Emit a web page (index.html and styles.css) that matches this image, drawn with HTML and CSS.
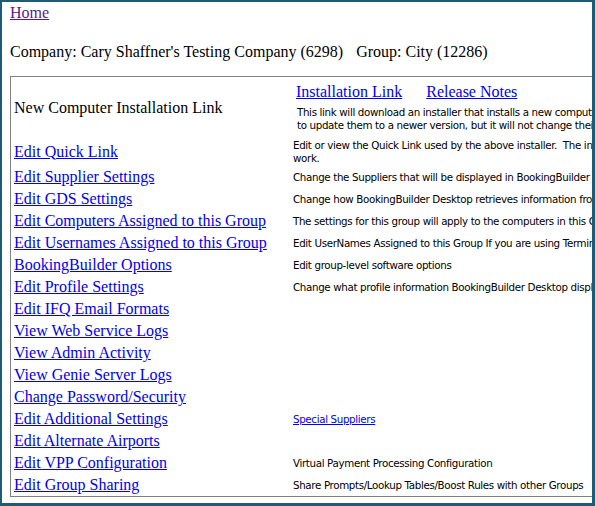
FILE: index.html
```html
<!DOCTYPE html>
<html lang="en">
<head>
  <meta charset="UTF-8">
  <title>Group Administration</title>
  <link rel="stylesheet" href="styles.css">
</head>
<body>

<div class="frame">
  <a class="home" href="#">Home</a>

  <div class="company">
    Company: Cary Shaffner's Testing Company (6298)<span class="group">Group: City (12286)</span>
  </div>

  <table class="admin">
    <tr class="install">
      <td class="name">New Computer Installation Link</td>
      <td class="info">
        <div class="install-links">
          <a href="#">Installation Link</a>
          <a href="#">Release Notes</a>
        </div>
        <div class="desc install-desc">This link will download an installer that installs a new computer with BookingBuilder Desktop. It can also be run on existing computers<br>to update them to a newer version, but it will not change their settings.</div>
      </td>
    </tr>
    <tr>
      <td class="name"><a href="#">Edit Quick Link</a></td>
      <td class="info desc">Edit or view the Quick Link used by the above installer.&nbsp; The installer uses this link to connect, so it must be valid for the installer to<br>work.</td>
    </tr>
    <tr>
      <td class="name"><a href="#">Edit Supplier Settings</a></td>
      <td class="info desc">Change the Suppliers that will be displayed in BookingBuilder Desktop</td>
    </tr>
    <tr>
      <td class="name"><a href="#">Edit GDS Settings</a></td>
      <td class="info desc">Change how BookingBuilder Desktop retrieves information from the GDS</td>
    </tr>
    <tr>
      <td class="name"><a href="#">Edit Computers Assigned to this Group</a></td>
      <td class="info desc">The settings for this group will apply to the computers in this Group</td>
    </tr>
    <tr>
      <td class="name"><a href="#">Edit Usernames Assigned to this Group</a></td>
      <td class="info desc">Edit UserNames Assigned to this Group If you are using Terminal Services</td>
    </tr>
    <tr>
      <td class="name"><a href="#">BookingBuilder Options</a></td>
      <td class="info desc">Edit group-level software options</td>
    </tr>
    <tr>
      <td class="name"><a href="#">Edit Profile Settings</a></td>
      <td class="info desc">Change what profile information BookingBuilder Desktop displays</td>
    </tr>
    <tr>
      <td class="name"><a href="#">Edit IFQ Email Formats</a></td>
      <td class="info desc"></td>
    </tr>
    <tr>
      <td class="name"><a href="#">View Web Service Logs</a></td>
      <td class="info desc"></td>
    </tr>
    <tr>
      <td class="name"><a href="#">View Admin Activity</a></td>
      <td class="info desc"></td>
    </tr>
    <tr>
      <td class="name"><a href="#">View Genie Server Logs</a></td>
      <td class="info desc"></td>
    </tr>
    <tr>
      <td class="name"><a href="#">Change Password/Security</a></td>
      <td class="info desc"></td>
    </tr>
    <tr>
      <td class="name"><a href="#">Edit Additional Settings</a></td>
      <td class="info desc"><a href="#">Special Suppliers</a></td>
    </tr>
    <tr>
      <td class="name"><a href="#">Edit Alternate Airports</a></td>
      <td class="info desc"></td>
    </tr>
    <tr>
      <td class="name"><a href="#">Edit VPP Configuration</a></td>
      <td class="info desc">Virtual Payment Processing Configuration</td>
    </tr>
    <tr>
      <td class="name"><a href="#">Edit Group Sharing</a></td>
      <td class="info desc">Share Prompts/Lookup Tables/Boost Rules with other Groups</td>
    </tr>
  </table>
</div>

</body>
</html>
```

FILE: styles.css
```css
* {
  box-sizing: border-box;
}

body {
  margin: 0;
  font-family: 'Liberation Serif', 'Times New Roman', serif;
  font-size: 16px;
  line-height: 18px;
  color: #000;
  background: #fff;
}

a {
  color: #0000ee;
}

.frame {
  width: 595px;
  height: 506px;
  overflow: hidden;
  border-style: solid;
  border-color: #1f5b75;
  border-width: 2px 3px 3px 2px;
  padding: 2px 8px 0;
}

.home {
  display: inline-block;
  color: #551a8b;
}

.company {
  margin-top: 21px;
  white-space: nowrap;
}

.group {
  margin-left: 13px;
}

.admin {
  margin-top: 15px;
  width: 1000px;
  table-layout: fixed;
  border: 1px solid #808080;
  border-collapse: separate;
  border-spacing: 0;
}

.admin td {
  vertical-align: middle;
  padding: 2px 3px;
}

.admin td.name {
  width: 279px;
  white-space: nowrap;
}

.admin td.info {
  padding: 2px 3px 1px;
}

.desc {
  font-family: 'DejaVu Sans', Verdana, sans-serif;
  font-size: 10.3px;
  letter-spacing: -0.35px;
  line-height: 13px;
  white-space: nowrap;
}

.install td.name,
.install td.info {
  padding-top: 6px;
  padding-bottom: 5px;
}

.install-links {
  display: flex;
  gap: 24px;
  padding-left: 3px;
  margin-bottom: 5px;
}

.install-desc {
  padding-left: 4px;
}
```
